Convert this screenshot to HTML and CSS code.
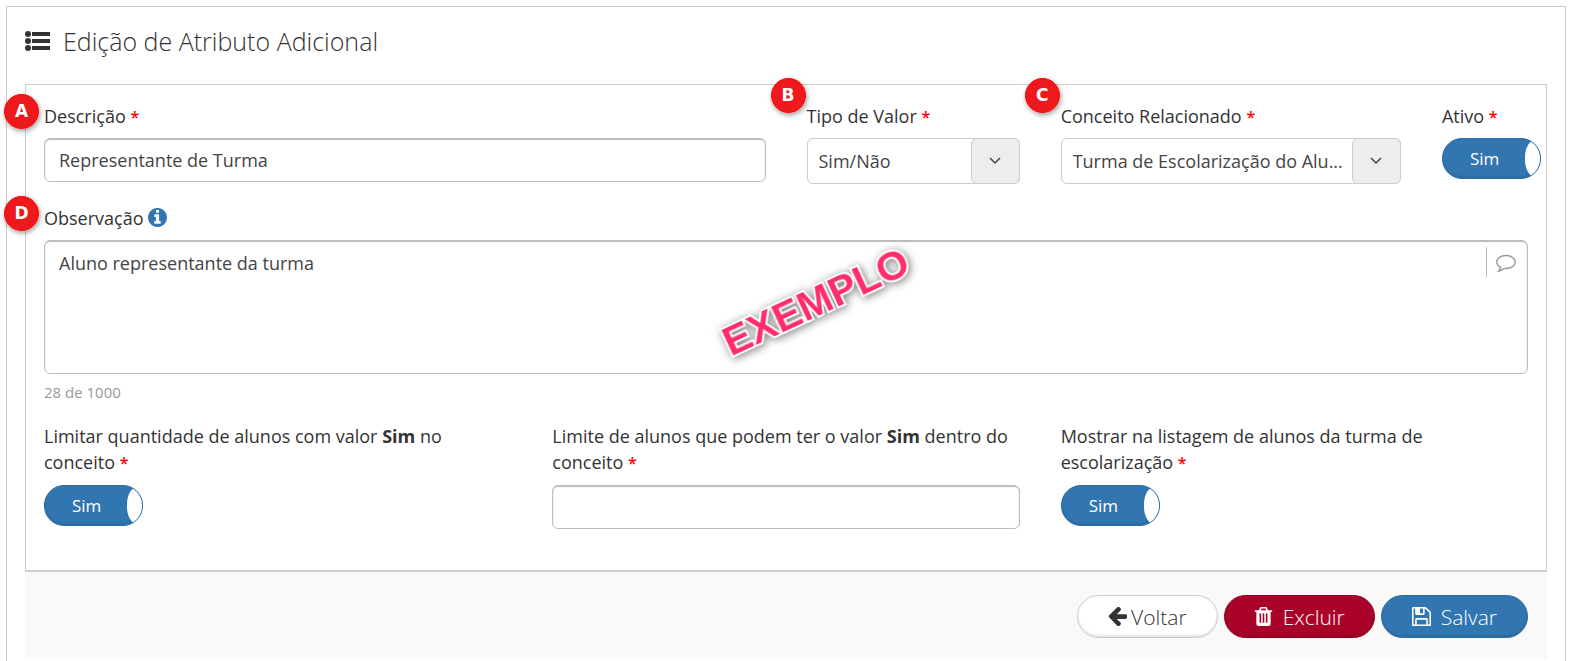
FILE: index.html
```
<!DOCTYPE html>
<html lang="pt-BR">
<head>
    <meta charset="UTF-8">
    <meta name="viewport" content="width=device-width, initial-scale=1.0">
    <title>Edição de Atributo Adicional</title>
    <link rel="stylesheet" href="styles.css">
</head>
<body>
    <main class="page">
        <h1>
            <svg class="list-icon" viewBox="0 0 26 20" aria-hidden="true">
                <circle cx="3" cy="3" r="3"/><circle cx="3" cy="10" r="3"/><circle cx="3" cy="17" r="3"/>
                <rect x="7" y="1" width="18" height="4"/><rect x="7" y="8" width="18" height="4"/><rect x="7" y="15" width="18" height="4"/>
            </svg>
            Edição de Atributo Adicional
        </h1>

        <form>
            <div class="panel">
                <div class="row">
                    <div class="field col-6">
                        <span class="badge badge-side">A</span>
                        <label for="descricao">Descrição <span class="required">*</span></label>
                        <input type="text" class="text-box" id="descricao" value="Representante de Turma">
                    </div>
                    <div class="field col-2">
                        <span class="badge badge-top">B</span>
                        <label for="tipo">Tipo de Valor <span class="required">*</span></label>
                        <div class="select">
                            <select id="tipo">
                                <option>Sim/Não</option>
                            </select>
                            <span class="select-arrow">
                                <svg viewBox="0 0 12 8" aria-hidden="true"><path d="M1 1l5 5 5-5"/></svg>
                            </span>
                        </div>
                    </div>
                    <div class="field col-3">
                        <span class="badge badge-top">C</span>
                        <label for="conceito">Conceito Relacionado <span class="required">*</span></label>
                        <div class="select">
                            <select id="conceito">
                                <option>Turma de Escolarização do Alu...</option>
                            </select>
                            <span class="select-arrow">
                                <svg viewBox="0 0 12 8" aria-hidden="true"><path d="M1 1l5 5 5-5"/></svg>
                            </span>
                        </div>
                    </div>
                    <div class="field col-1">
                        <label for="ativo">Ativo <span class="required">*</span></label>
                        <div class="toggle">
                            <input type="checkbox" id="ativo" checked>
                            <span class="toggle-text">Sim</span>
                            <span class="toggle-handle"></span>
                        </div>
                    </div>
                </div>

                <div class="field observacao">
                    <span class="badge badge-side">D</span>
                    <label for="observacao">Observação
                        <svg class="info-icon" viewBox="0 128 1536 1536" aria-hidden="true"><path d="M1024 1376v-160q0-14-9-23t-23-9h-96v-512q0-14-9-23t-23-9h-320q-14 0-23 9t-9 23v160q0 14 9 23t23 9h96v320h-96q-14 0-23 9t-9 23v160q0 14 9 23t23 9h448q14 0 23-9t9-23zM896 480v-160q0-14-9-23t-23-9h-192q-14 0-23 9t-9 23v160q0 14 9 23t23 9h192q14 0 23-9t9-23zM1536 896q0 209-103 385.500t-279.500 279.500-385.500 103-385.500-103-279.500-279.500-103-385.500 103-385.500 279.500-279.500 385.500-103 385.500 103 279.500 279.500 103 385.500z"/></svg>
                    </label>
                    <div class="textarea-box">
                        <textarea id="observacao" maxlength="1000">Aluno representante da turma</textarea>
                        <span class="comment">
                            <svg viewBox="0 0 1792 1792" aria-hidden="true"><path d="M896 384q-204 0-381.500 69.500t-282 187.500-104.500 255q0 112 71.500 213.500t201.500 175.500l87 50-27 96q-24 91-70 172 152-63 275-171l43-38 57 6q69 8 130 8 204 0 381.500-69.500t282-187.500 104.500-255-104.500-255-282-187.500-381.500-69.500zm896 512q0 174-120 321.500t-326 233-450 85.500q-70 0-145-8-198 175-460 242-49 14-114 22h-5q-15 0-27-10.500t-16-27.500v-1q-3-4-.5-12t2-10 4.500-9.500l6-9 7-8.500 8-9q7-8 31-34.500t34.500-38 31-39.500 32.500-51 27-59 26-76q-157-89-247.500-220t-90.500-281q0-174 120-321.500t326-233 450-85.500 450 85.500 326 233 120 321.500z"/></svg>
                        </span>
                        <span class="stamp">EXEMPLO</span>
                    </div>
                    <p class="counter">28 de 1000</p>
                </div>

                <div class="row limits">
                    <div class="field col-4">
                        <label for="limitar">Limitar quantidade de alunos com valor <strong>Sim</strong> no conceito <span class="required">*</span></label>
                        <div class="toggle">
                            <input type="checkbox" id="limitar" checked>
                            <span class="toggle-text">Sim</span>
                            <span class="toggle-handle"></span>
                        </div>
                    </div>
                    <div class="field col-4">
                        <label for="limite">Limite de alunos que podem ter o valor <strong>Sim</strong> dentro do conceito <span class="required">*</span></label>
                        <input type="text" class="text-box" id="limite">
                    </div>
                    <div class="field col-4">
                        <label for="mostrar">Mostrar na listagem de alunos da turma de escolarização <span class="required">*</span></label>
                        <div class="toggle">
                            <input type="checkbox" id="mostrar" checked>
                            <span class="toggle-text">Sim</span>
                            <span class="toggle-handle"></span>
                        </div>
                    </div>
                </div>
            </div>

            <div class="actions">
                <button type="button" class="btn btn-back">
                    <svg viewBox="0 128 1536 1536" aria-hidden="true"><path d="M1536 832v128q0 53-32.500 90.500t-84.500 37.500h-704l293 294q38 36 38 90t-38 90l-75 76q-37 37-90 37-52 0-91-37l-651-652q-37-37-37-90 0-52 37-91l651-650q38-38 91-38 52 0 90 38l75 74q38 38 38 91t-38 91l-293 293h704q52 0 84.500 37.500t32.500 90.500z"/></svg>
                    Voltar
                </button>
                <button type="button" class="btn btn-delete">
                    <svg viewBox="128 128 1536 1536" aria-hidden="true"><path d="M704 1376v-704q0-14-9-23t-23-9h-64q-14 0-23 9t-9 23v704q0 14 9 23t23 9h64q14 0 23-9t9-23zm256 0v-704q0-14-9-23t-23-9h-64q-14 0-23 9t-9 23v704q0 14 9 23t23 9h64q14 0 23-9t9-23zm256 0v-704q0-14-9-23t-23-9h-64q-14 0-23 9t-9 23v704q0 14 9 23t23 9h64q14 0 23-9t9-23zm-544-992h448l-48-117q-7-9-17-11h-317q-10 2-17 11zm928 32v64q0 14-9 23t-23 9h-96v948q0 83-47 143.500t-113 60.500h-832q-66 0-113-58.500t-47-141.500v-952h-96q-14 0-23-9t-9-23v-64q0-14 9-23t23-9h309l70-167q15-37 54-63t79-26h320q40 0 79 26t54 63l70 167h309q14 0 23 9t9 23z"/></svg>
                    Excluir
                </button>
                <button type="submit" class="btn btn-save">
                    <svg viewBox="128 128 1536 1536" aria-hidden="true"><path d="M512 1536h768v-384h-768v384zm896 0h128v-896q0-14-10-38.500t-20-34.500l-281-281q-10-10-34-20t-39-10v416q0 40-28 68t-68 28h-576q-40 0-68-28t-28-68v-416h-128v1280h128v-416q0-40 28-68t68-28h832q40 0 68 28t28 68v416zm-384-928v-320q0-13-9.500-22.500t-22.500-9.500h-192q-13 0-22.500 9.500t-9.500 22.500v320q0 13 9.500 22.500t22.500 9.500h192q13 0 22.500-9.500t9.500-22.500zm640 32v928q0 40-28 68t-68 28h-1344q-40 0-68-28t-28-68v-1344q0-40 28-68t68-28h928q40 0 88 20t76 48l280 280q28 28 48 76t20 88z"/></svg>
                    Salvar
                </button>
            </div>
        </form>
    </main>
</body>
</html>
```

FILE: styles.css
```
* {
    box-sizing: border-box;
}

body {
    font-family: "Open Sans", sans-serif;
    font-size: 18px;
    line-height: 26px;
    margin: 0;
    padding: 6px 18px 0 6px;
    background-color: #fff;
    color: #333;
}

.page {
    min-height: calc(100vh - 6px);
    padding: 16px 18px 0;
    border: 1px solid #ccc;
    border-bottom: none;
}

h1 {
    display: flex;
    align-items: center;
    gap: 12px;
    margin: 0 0 25px;
    font-size: 25px;
    font-weight: 300;
    line-height: 36px;
}

.list-icon {
    width: 26px;
    height: 20px;
    fill: #333;
}

.panel {
    padding: 18px 18px 41px;
    border: 1px solid #ccc;
    border-bottom: 2px solid #ccc;
}

.row {
    display: grid;
    grid-template-columns: repeat(12, minmax(0, 1fr));
    column-gap: 41px;
    align-items: start;
}

.col-1 { grid-column: span 1; }
.col-2 { grid-column: span 2; }
.col-3 { grid-column: span 3; }
.col-4 { grid-column: span 4; }
.col-6 { grid-column: span 6; }

.field {
    position: relative;
}

.field label {
    display: block;
    margin-bottom: 9px;
}

.limits label {
    margin-bottom: 10px;
}

.required {
    color: #f00;
    font-size: 16px;
    font-weight: 600;
    line-height: 1;
}

.text-box,
textarea {
    display: block;
    width: 100%;
    padding: 8px 14px;
    border: 1px solid #bbb;
    border-radius: 6px;
    background-color: #fff;
    box-shadow: inset 0 1px 1px #bbb;
    color: #444;
    font: inherit;
}

.text-box {
    height: 44px;
}

textarea {
    height: 134px;
    padding: 9px 60px 9px 14px;
    resize: none;
}

/* lettered markers over the fields */
.badge {
    position: absolute;
    z-index: 1;
    width: 35px;
    height: 35px;
    border: 1px solid #f00;
    border-radius: 50%;
    background-color: rgba(237, 18, 22, 0.97);
    box-shadow: 1px 2px 5px rgba(0, 0, 0, 0.4);
    color: #fff;
    font: bold 17px/33px "DejaVu Sans", sans-serif;
    text-align: center;
}

.badge-side {
    left: -40px;
    top: -9px;
}

.badge-top {
    left: -36px;
    top: -25px;
}

.select {
    position: relative;
}

.select select {
    appearance: none;
    display: block;
    width: 100%;
    height: 46px;
    padding: 0 52px 0 11px;
    border: 1px solid #ccc;
    border-radius: 6px;
    background-color: #fff;
    color: #444;
    font: inherit;
}

.select-arrow {
    position: absolute;
    top: 0;
    right: 0;
    bottom: 0;
    display: flex;
    align-items: center;
    justify-content: center;
    width: 49px;
    border: 1px solid #ccc;
    border-radius: 6px;
    background-color: #ededed;
    pointer-events: none;
}

.select-arrow svg {
    width: 12px;
    height: 8px;
    fill: none;
    stroke: #444;
    stroke-width: 1.5;
}

.toggle {
    position: relative;
    width: 99px;
    height: 41px;
    border: 1px solid #2c6da8;
    border-radius: 20px;
    background-color: #3276b1;
    box-shadow: inset 0 -2px 2px rgba(0, 0, 0, 0.1);
    overflow: hidden;
}

.toggle input {
    appearance: none;
    position: absolute;
    inset: 0;
    margin: 0;
    cursor: pointer;
}

.toggle-text {
    display: block;
    padding-left: 27px;
    color: #fff;
    font-size: 17px;
    line-height: 40px;
    pointer-events: none;
}

.toggle-handle {
    position: absolute;
    top: 0;
    right: 0;
    bottom: 0;
    width: 15px;
    border-radius: 12px 0 0 12px / 18px 0 0 18px;
    background-color: #fff;
    pointer-events: none;
}

.observacao {
    margin-top: 21px;
}

.info-icon {
    width: 19px;
    height: 19px;
    fill: #3276b1;
    vertical-align: -2px;
}

.textarea-box {
    position: relative;
}

.comment {
    position: absolute;
    top: 7px;
    right: 12px;
    display: flex;
    align-items: center;
    padding-left: 9px;
    height: 30px;
    border-left: 1px solid #bbb;
}

.comment svg {
    width: 20px;
    height: 20px;
    fill: #999;
}

.stamp {
    position: absolute;
    left: 52%;
    top: 46%;
    transform: translate(-50%, -50%) rotate(-25deg);
    color: #ff2d6b;
    font: bold 41px/41px "Liberation Sans", Arial, sans-serif;
    -webkit-text-stroke: 4px #fff;
    paint-order: stroke fill;
    filter: drop-shadow(1px 2px 4px rgba(0, 0, 0, 0.5));
    pointer-events: none;
}

.counter {
    margin: 5px 0 18px;
    color: #999;
    font-size: 15px;
}

.actions {
    display: flex;
    justify-content: flex-end;
    gap: 6px;
    padding: 23px 19px 21px;
    background-color: #f9f9f9;
}

.btn {
    display: flex;
    align-items: center;
    gap: 10px;
    height: 43px;
    padding: 0 30px;
    border: 1px solid #2c699d;
    border-radius: 22px;
    background-color: #3276b1;
    box-shadow: inset 0 -2px 2px rgba(0, 0, 0, 0.1);
    color: #fff;
    font: 300 21px/26px "Open Sans", sans-serif;
    cursor: pointer;
}

.btn svg {
    width: 19px;
    height: 19px;
    fill: #fff;
}

.btn-back {
    gap: 4px;
    border-color: #ccc;
    background-color: #fff;
    color: #333;
}

.btn-back svg {
    fill: #333;
}

.btn-delete {
    padding: 0 29px;
    border-color: #900022;
    background-color: #a90329;
}
```
